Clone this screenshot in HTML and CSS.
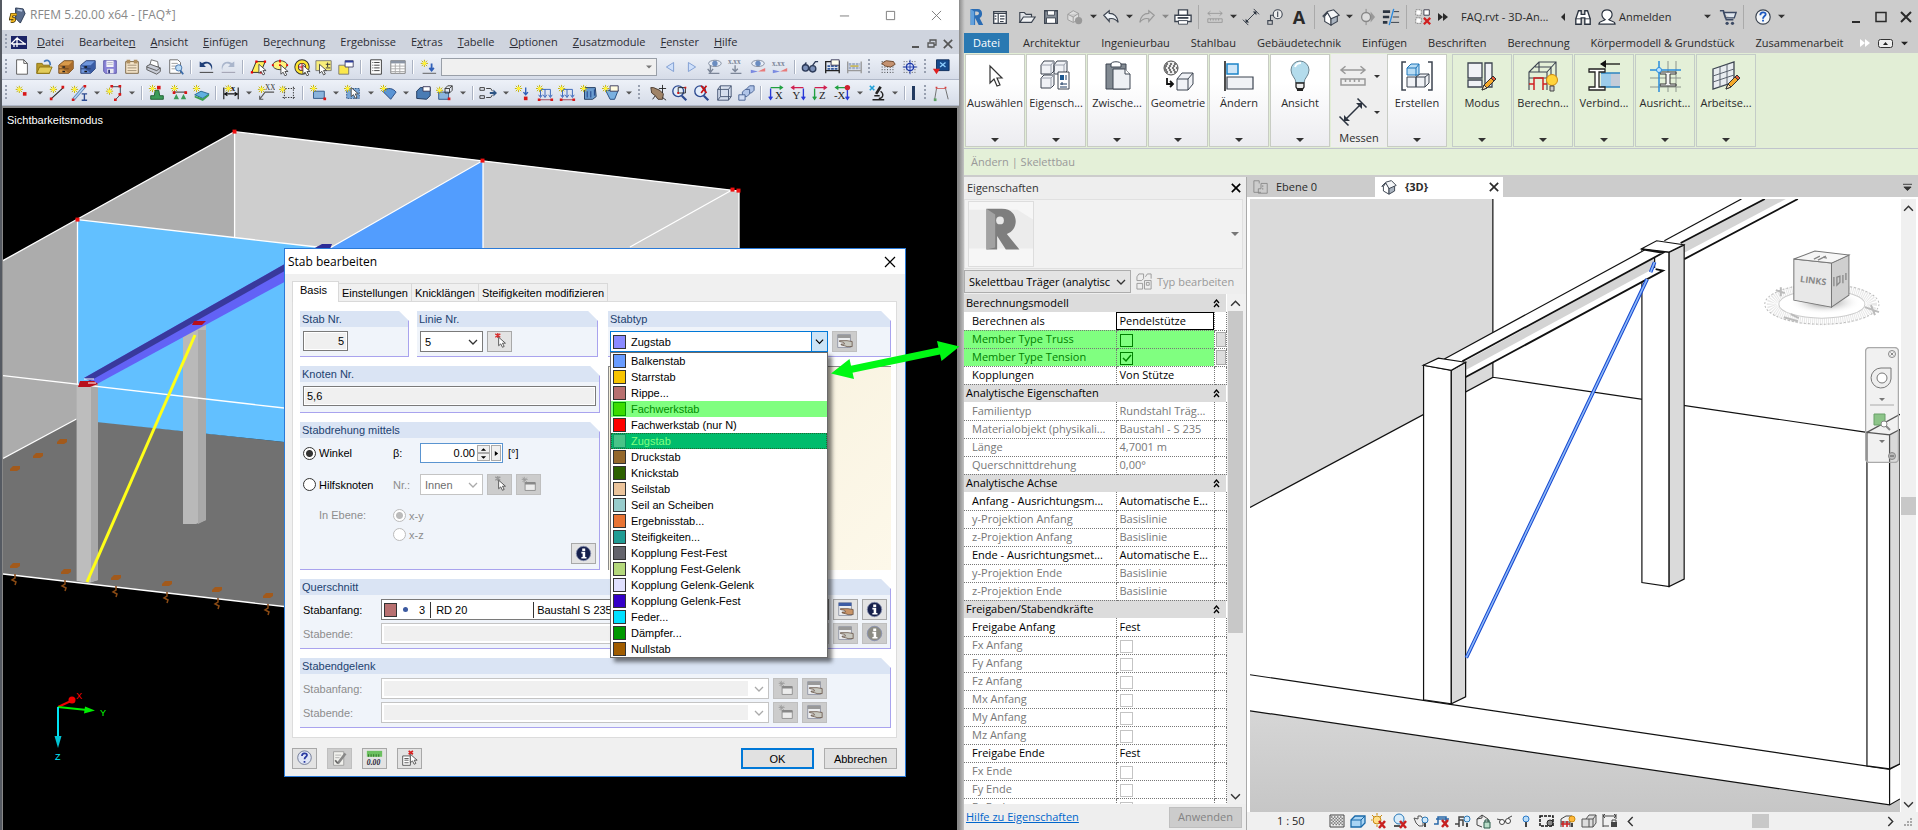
FILE: index.html
```html
<!DOCTYPE html>
<html lang="de">
<head>
<meta charset="utf-8">
<title>RFEM und Revit</title>
<link rel="stylesheet" href="styles.css">
</head>
<body>
<svg class="sprite" aria-hidden="true">
<defs>
<g id="star"><path d="M4 0v8M0 4h8M1 1l6 6M7 1l-6 6" stroke="#c4b410" stroke-width="1.1"/><circle cx="4" cy="4" r="2" fill="#fff23a"/></g>
<path id="cur" d="M0 0v10l2.500-2.200 2 4 2-1-2-3.800h3.500z" fill="#fff" stroke="#444"/>
</defs>
<symbol id="down" viewBox="0 0 8 8"><path d="M0 2h8l-4 4z" fill="currentColor"/></symbol>
<symbol id="chev" viewBox="0 0 10 10"><path d="M1 3l4 4 4-4" fill="none" stroke="currentColor" stroke-width="1.300"/></symbol>
<symbol id="x" viewBox="0 0 12 12"><path d="M1 1l10 10M11 1l-10 10" stroke="currentColor" stroke-width="var(--sw,1)"/></symbol>
<symbol id="new" viewBox="0 0 20 20"><path d="M4 2h8l4 4v12h-12z" fill="#fff" stroke="#555"/><path d="M12 2v4h4" fill="none" stroke="#555"/></symbol>
<symbol id="open" viewBox="0 0 20 20"><path d="M2 6h6l1 2h7v9h-14z" fill="#b99a2a" stroke="#8a7010"/><path d="M5 10h14l-3 7h-14z" fill="#e2cc5a" stroke="#8a7010"/><path d="M10 4c4-3 7-1 7 4" fill="none" stroke="#3f74b8" stroke-width="2"/></symbol>
<symbol id="cab" viewBox="0 0 20 20"><path d="M2 8l6-5h10v9l-5 5h-11z" fill="#d99a4a" stroke="#6e451a"/><path d="M2 8h11l5-5v9l-5 5z" fill="#a86c2c"/><path d="M2 12h11" stroke="#6e451a"/><path d="M6 10h3M6 15h3" stroke="#222" stroke-width="1.500"/></symbol>
<symbol id="cabb" viewBox="0 0 20 20"><path d="M2 8l6-5h10v9l-5 5h-11z" fill="#6f96dc" stroke="#22386e"/><path d="M2 8h11l5-5v9l-5 5z" fill="#3a5ca4"/><path d="M2 12h11" stroke="#22386e"/><path d="M6 10h3M6 15h3" stroke="#111" stroke-width="1.500"/></symbol>
<symbol id="save" viewBox="0 0 20 20"><path d="M3 3h14v14h-12l-2-2z" fill="#8a84d8" stroke="#5a55a8"/><path d="M6 3h8v7h-8z" fill="#f4f4f8"/><path d="M7 12h7v5h-7z" fill="#e8e8f0"/><path d="M8 13h2v4h-2z" fill="#333a80"/><path d="M7 5h6M7 7h6" stroke="#b8b8c8"/></symbol>
<symbol id="clip" viewBox="0 0 20 20"><path d="M3 4h14v13h-14z" fill="#f6e6cc" stroke="#75603c"/><path d="M5 8h10M5 11h10M5 14h10" stroke="#9a8a70"/><path d="M4 2h4v4h-4zM12 2h4v4h-4z" fill="#b09060"/></symbol>
<symbol id="print" viewBox="0 0 20 20"><path d="M5 9l2-7 7 2 1 6z" fill="#fff" stroke="#666"/><path d="M2 9l4-2 11 4v4l-4 3-11-5z" fill="#c8ccd6" stroke="#555"/><path d="M2 10l11 4 4-3" fill="none" stroke="#555"/></symbol>
<symbol id="prev" viewBox="0 0 20 20"><path d="M3 2h9l3 3v12h-12z" fill="#fff" stroke="#666"/><path d="M5 6h7M5 9h5M5 12h4" stroke="#999"/><circle cx="13" cy="11" r="3.500" fill="#bcdcf6" stroke="#3c6ca8"/><path d="M15 14l3 4" stroke="#3c6ca8" stroke-width="2"/></symbol>
<symbol id="undo" viewBox="0 0 20 20"><path d="M3 4v6h7l-2.500-2.500c4-3 8-1 9 6 2-7-3-12-11-8z" fill="#1f3f78"/><path d="M3 16h15" stroke="#333"/></symbol>
<symbol id="redo" viewBox="0 0 20 20"><path d="M17 4v6h-7l2.500-2.500c-4-3-8-1-9 6-2-7 3-12 11-8z" fill="#aab6cc"/><path d="M3 16h15" stroke="#99a"/></symbol>
<symbol id="s1" viewBox="0 0 20 20"><path d="M3 16l5-12h10l-5 12z" fill="#ffef5a" stroke="#222"/><path d="M2 16h2.500M7 4h2.500M16.500 4h2.500M12 16h2.500" stroke="#e00" stroke-width="2.500"/><use href="#cur" x="11" y="7"/></symbol>
<symbol id="s2" viewBox="0 0 20 20"><ellipse cx="10" cy="8" rx="8" ry="5" fill="#fff27a" stroke="#333"/><path d="M10 2v3M10 7v2M1 8h2M17 8h2M9 8h2" stroke="#e00" stroke-width="2"/><use href="#cur" x="11" y="8"/></symbol>
<symbol id="s3" viewBox="0 0 20 20"><circle cx="10" cy="10" r="6" fill="none" stroke="#333" stroke-width="5"/><circle cx="10" cy="10" r="6" fill="none" stroke="#ffe632" stroke-width="3"/><path d="M10 6v8M6 10h8" stroke="#e00"/><use href="#cur" x="11" y="8"/></symbol>
<symbol id="s4" viewBox="0 0 20 20"><path d="M1 3h17v11h-17z" fill="#f8ee7a" stroke="#777"/><path d="M14 5v5M12 7h5M12 11h5" stroke="#333"/><use href="#cur" x="5" y="7"/></symbol>
<symbol id="s5" viewBox="0 0 20 20"><path d="M2 8h11v10h-11z" fill="#fbe84c" stroke="#777"/><path d="M9 3h9v7h-9z" fill="#fff" stroke="#446"/><path d="M9 3h9v2h-9z" fill="#2a3c9c"/></symbol>
<symbol id="doc" viewBox="0 0 20 20"><path d="M4 2h12v16h-12z" fill="#fff" stroke="#333"/><path d="M6 5h1M6 8h1M6 11h1M6 14h1M8 5h6M8 8h6M8 11h6M8 14h6" stroke="#333"/></symbol>
<symbol id="tab" viewBox="0 0 20 20"><path d="M2 3h16v14h-16z" fill="#fff" stroke="#777"/><path d="M2 3h16v3h-16z" fill="#8a94a4"/><path d="M2 9h16M2 12h16M2 15h16M7 6v11M12 6v11" stroke="#aaa"/></symbol>
<symbol id="load" viewBox="0 0 20 20"><use href="#star" x="2" y="2"/><path d="M14 6v8M11.500 11l2.500 3 2.500-3" fill="none" stroke="#2f5fb8" stroke-width="2"/><path d="M4 17h15" stroke="#555"/></symbol>
<symbol id="lt" viewBox="0 0 20 20"><path d="M14 5v10l-8-5z" fill="#cfe0fa" stroke="#7a9ad0"/></symbol>
<symbol id="rt" viewBox="0 0 20 20"><path d="M6 5v10l8-5z" fill="#cfe0fa" stroke="#7a9ad0"/></symbol>
<symbol id="eye" viewBox="0 0 20 20"><ellipse cx="11" cy="6" rx="7" ry="3.500" fill="#e8eef8" stroke="#7c8698"/><circle cx="11" cy="6" r="3" fill="#6a8cc0"/><path d="M6 8v7M3 12l3 4 3-4M4 17h12" fill="none" stroke="#7c8698" stroke-width="1.500"/></symbol>
<symbol id="xx" viewBox="0 0 20 20"><text x="1" y="7" class="g8">x.xx</text><path d="M9 8v7M6 12l3 3 3-3M4 17h12" fill="none" stroke="#7c8698" stroke-width="1.500"/></symbol>
<symbol id="eye2" viewBox="0 0 20 20"><ellipse cx="10" cy="6" rx="7" ry="3.500" fill="#e8eef8" stroke="#7c8698"/><circle cx="10" cy="6" r="3" fill="#6a8cc0"/><path d="M2 17v-4l8 2z" fill="#7a8ae0"/><path d="M18 11v4h-8z" fill="#e87a7a"/></symbol>
<symbol id="xx2" viewBox="0 0 20 20"><text x="1" y="9" class="g8">x.xx</text><path d="M2 17v-4l8 2z" fill="#7a8ae0"/><path d="M18 11v4h-8z" fill="#e87a7a"/></symbol>
<symbol id="gls" viewBox="0 0 20 20"><path d="M2 10l4-5M10 12l6-8h3" fill="none" stroke="#2c3a58" stroke-width="1.500"/><circle cx="5" cy="11" r="3.500" fill="#7c90b8" stroke="#2c3a58" stroke-width="1.500"/><circle cx="13" cy="12" r="3.500" fill="#7c90b8" stroke="#2c3a58" stroke-width="1.500"/></symbol>
<symbol id="abk" viewBox="0 0 20 20"><path d="M3 17v-13h15v13M3 14h15" fill="none" stroke="#222" stroke-width="1.500"/><path d="M5 9h11M5 12h11" stroke="#335a9c" stroke-width="2" stroke-dasharray="3 1"/><path d="M9 2h9v6h-9z" fill="#ffe" stroke="#335"/></symbol>
<symbol id="abk2" viewBox="0 0 20 20"><path d="M3 17v-13M18 4v13M3 14h15" fill="none" stroke="#999" stroke-width="1.500"/><path d="M4 7h13M4 11h13" stroke="#a0aec8" stroke-width="3" stroke-dasharray="3 1"/><path d="M6 9h9" stroke="#c8b860" stroke-width="2"/></symbol>
<symbol id="dots" viewBox="0 0 20 20"><path d="M3 4h15M3 7h15M3 10h15M3 13h15M3 16h15" stroke="#222" stroke-dasharray="1 2"/><path d="M3 6l5-3 8 1 2 3-5 3-6-1z" fill="#c49270" stroke="#6a4428"/></symbol>
<symbol id="snap" viewBox="0 0 20 20"><path d="M3 4h15M3 7h15M3 10h15M3 13h15M3 16h15" stroke="#444" stroke-dasharray="1 2"/><circle cx="10" cy="10" r="4" fill="#dfe6ff" stroke="#1c38a8" stroke-width="1.500"/><path d="M10 2v16M2 10h16" stroke="#1c38a8"/></symbol>
<symbol id="mon" viewBox="0 0 20 20"><path d="M5 2h14v12h-14z" fill="#164a8c" stroke="#0b2a58"/><path d="M9 5l6 5M15 5l-6 5" stroke="#8fd0ff" stroke-width="1.500"/><path d="M1 12h8l-4 6z" fill="#e02020"/></symbol>
<symbol id="node" viewBox="0 0 20 20"><use href="#star" x="3" y="2"/><path d="M11 9h4v4h-4z" fill="#d81818"/></symbol>
<symbol id="line" viewBox="0 0 20 20"><path d="M4 16l13-12" stroke="#222" stroke-width="1.200"/><path d="M2 15h3v3h-3zM15 2h3v3h-3z" fill="#d81818"/><use href="#star" x="2" y="2"/></symbol>
<symbol id="beam" viewBox="0 0 20 20"><path d="M4 17l12-14" stroke="#5a82b8" stroke-width="3.500"/><path d="M4 17l12-14" stroke="#b8d8f4" stroke-width="1.500"/><use href="#star" x="1" y="2"/><path d="M13 11h6M16 11v7M13 18h6" stroke="#2c4a90" stroke-width="1.500"/><path d="M2 16h3v3h-3zM15 1h3v3h-3z" fill="#d81818"/></symbol>
<symbol id="poly" viewBox="0 0 20 20"><path d="M7 3h10v9l-5 5" fill="none" stroke="#334"/><use href="#star" x="1" y="4"/><path d="M6 1h3v3h-3zM15 1h3v3h-3zM15 10h3v3h-3zM10 16h3v3h-3z" fill="#d81818"/></symbol>
<symbol id="supp" viewBox="0 0 20 20"><path d="M8 7h4l1 6h4v4h-14v-4h4z" fill="#3c9c58" stroke="#1c5c30"/><use href="#star" x="1" y="1"/><path d="M10 2h4v4h-4z" fill="#d81818"/></symbol>
<symbol id="supl" viewBox="0 0 20 20"><use href="#star" x="1" y="1"/><path d="M5 9h13" stroke="#222"/><path d="M7 11l3 6h-6zM15 11l3 6h-6z" fill="#3c9c58"/><path d="M3 8h3v3h-3zM16 8h3v3h-3z" fill="#d81818"/></symbol>
<symbol id="sups" viewBox="0 0 20 20"><path d="M3 12l7-4 9 3-7 5z" fill="#60b0e0" stroke="#22628c"/><path d="M3 13v2l9 4 7-6v-2l-7 5z" fill="#3ca050"/><use href="#star" x="1" y="1"/></symbol>
<symbol id="dim" viewBox="0 0 20 20"><path d="M2 4v13M18 4v13M3 11h14M6 9l-3 2 3 2M14 9l3 2-3 2" fill="none" stroke="#111" stroke-width="1.200"/><use href="#star" x="3" y="1"/><text x="10" y="8" class="k9">x</text></symbol>
<symbol id="dimx" viewBox="0 0 20 20"><path d="M3 17l6-8h10M3 13v4h4" fill="none" stroke="#555" stroke-width="1.200"/><use href="#star" x="1" y="2"/><text x="9" y="7" class="k8">XX</text></symbol>
<symbol id="gbox" viewBox="0 0 20 20"><path d="M4 5h14M4 15h14M6 3v14M16 3v14" stroke="#222" stroke-dasharray="1.500 1.500"/><use href="#star" x="0" y="2"/></symbol>
<symbol id="surf" viewBox="0 0 20 20"><path d="M5 8h12v8h-12z" fill="#8ab4dc" stroke="#2c5484"/><use href="#star" x="1" y="1"/><path d="M16 15h3v3h-3z" fill="#d81818"/></symbol>
<symbol id="surc" viewBox="0 0 20 20"><path d="M3 5h14v11h-14z" fill="#7aa8d8" stroke="#2c5484" stroke-dasharray="2 1"/><use href="#star" x="0" y="1"/><use href="#cur" x="8" y="4"/></symbol>
<symbol id="fan" viewBox="0 0 20 20"><path d="M4 8c6-5 12-3 15 1l-6 8z" fill="#5a94d4" stroke="#22447c"/><use href="#star" x="1" y="1"/></symbol>
<symbol id="sol" viewBox="0 0 20 20"><path d="M3 8l4-4h11v9l-4 4-11-1z" fill="#4a7cb4" stroke="#1c3458"/><path d="M10 3h8v5h-8z" fill="#fff" stroke="#335"/></symbol>
<symbol id="opn" viewBox="0 0 20 20"><path d="M3 9h11v8h-11z" fill="#8ab4dc" stroke="#2c5484"/><path d="M10 5l3-3h5v5l-3 3h-5zM10 5h5v5M15 5l3-3" fill="none" stroke="#333"/><use href="#star" x="0" y="3"/><path d="M13 15h3v3h-3z" fill="#d81818"/></symbol>
<symbol id="link" viewBox="0 0 20 20"><path d="M1 4h5v3h-5zM1 13h5v3h-5zM8 5h5l2 3M8 15h5l2-3" fill="none" stroke="#333"/><path d="M12 9h4v-3l4 4-4 4v-3h-4z" fill="#2c5484"/></symbol>
<symbol id="nl" viewBox="0 0 20 20"><use href="#star" x="1" y="1"/><path d="M13 4v8M10.500 9l2.500 3 2.500-3" fill="none" stroke="#2f5fb8" stroke-width="1.500"/><path d="M11 14h4v4h-4z" fill="#d81818"/></symbol>
<symbol id="ll" viewBox="0 0 20 20"><path d="M5 6h11M5 6v8M10 6v8M16 6v8M3 12l2 3 2-3M8 12l2 3 2-3M14 12l2 3 2-3" fill="none" stroke="#2f5fb8"/><use href="#star" x="0" y="1"/><path d="M3 17.500h15" stroke="#a04050"/><path d="M2 16h3v3h-3zM16 16h3v3h-3z" fill="#d81818"/></symbol>
<symbol id="sl" viewBox="0 0 20 20"><path d="M5 4h12l1 10-4 3h-9z" fill="#6a9cd0" stroke="#1c3458"/><path d="M8 8v7M12 8v7M16 6v7" stroke="#183a80"/><use href="#star" x="0" y="1"/></symbol>
<symbol id="fl" viewBox="0 0 20 20"><path d="M4 7h14l-4 10h-5z" fill="#7ab0e0" stroke="#1c4478"/><path d="M9 2h9v6h-9z" fill="#fffbe0" stroke="#335"/><use href="#star" x="0" y="1"/></symbol>
<symbol id="hand" viewBox="0 0 20 20"><path d="M2 4l3 0 7 3 4 4-1 6h-5l-3-4-4-3z" fill="#a08468" stroke="#44362a"/><path d="M15 1v9M11 5h8M4 17l3-4M15 15l4 3" stroke="#222"/></symbol>
<symbol id="zm" viewBox="0 0 20 20"><circle cx="8" cy="8" r="6" fill="#e4eefa" stroke="#2c4a90" stroke-width="1.500"/><path d="M12 13l5 5" stroke="#2c4a90" stroke-width="2.500"/><path d="M8 4h8v6h-8z" fill="none" stroke="#222"/><path d="M15 3h2v2h-2zM7 9h2v2h-2z" fill="#d81818"/></symbol>
<symbol id="zx" viewBox="0 0 20 20"><circle cx="8" cy="8" r="6" fill="#e4eefa" stroke="#2c4a90" stroke-width="1.500"/><path d="M12 13l5 5" stroke="#2c4a90" stroke-width="2.500"/><path d="M9 2l6 8M15 2l-6 8" stroke="#c81010" stroke-width="1.800"/></symbol>
<symbol id="box" viewBox="0 0 20 20"><path d="M3 6l3-4h12v12l-3 4h-12zM3 6h12v12M15 6l3-4M6 2v12h12M6 14l-3 4" fill="#c8d4ea" fill-opacity=".5" stroke="#445470"/></symbol>
<symbol id="boxs" viewBox="0 0 20 20"><path d="M11 5l3-3h5v5l-3 3h-5z" fill="#b0c4e8" stroke="#445e90"/><path d="M6 9l3-3h5v5l-3 3h-5z" fill="#b0c4e8" stroke="#445e90"/><path d="M2 12h7v6h-7z" fill="#d0dcf4" stroke="#445e90"/></symbol>
<symbol id="vx" viewBox="0 0 20 20"><path d="M4 4h13M14 2l3 2-3 2" fill="none" stroke="#20a040" stroke-width="1.500"/><path d="M4 5v12M2 14l2 3 2-3" fill="none" stroke="#2838d8" stroke-width="1.500"/><text x="9" y="17" class="k11">X</text></symbol>
<symbol id="vy" viewBox="0 0 20 20"><path d="M3 4h13M6 2l-3 2 3 2" fill="none" stroke="#d02050" stroke-width="1.500"/><path d="M16 5v12M14 14l2 3 2-3" fill="none" stroke="#2838d8" stroke-width="1.500"/><text x="4" y="17" class="k11">Y</text></symbol>
<symbol id="vz" viewBox="0 0 20 20"><path d="M4 4h13M14 2l3 2-3 2" fill="none" stroke="#d02050" stroke-width="1.500"/><path d="M4 5v12M2 14l2 3 2-3" fill="none" stroke="#20a040" stroke-width="1.500"/><text x="9" y="17" class="k11">Z</text></symbol>
<symbol id="vm" viewBox="0 0 20 20"><path d="M3 4h12M6 2l-3 2 3 2" fill="none" stroke="#20a040" stroke-width="1.500"/><path d="M16 5v12M14 14l2 3 2-3" fill="none" stroke="#2838d8" stroke-width="1.500"/><circle cx="16" cy="4" r="3" fill="#d02030"/><text x="1" y="17" class="k11">-X</text></symbol>
<symbol id="mic" viewBox="0 0 20 20"><path d="M2 2l5 5M7 2l-5 5" stroke="#20a0d8" stroke-width="1.800"/><path d="M14 3l-5 8" stroke="#222" stroke-width="3"/><path d="M14 8c4 3 3 8-2 8M5 17.500h13M7 13h6" fill="none" stroke="#222" stroke-width="1.500"/></symbol>
<symbol id="frm" viewBox="0 0 20 20"><path d="M3 17l2-12h10l3 12" fill="none" stroke="#666"/><path d="M5 5h10" stroke="#e07070"/><path d="M2 16h3v3h-3z" fill="#5aa060"/><path d="M4 3h2v2h-2zM14 3h2v2h-2z" fill="#d84040"/></symbol>
<symbol id="edit" viewBox="0 0 20 20"><path d="M2 2h15v15h-15z" fill="#eceef0" stroke="#8a90a0"/><path d="M2 2h15v4h-15z" fill="var(--bar,#3c5ca4)"/><path d="M4 9h9l6 1v6h-6l-3-1-4-1v-1h4l-1-2-5-1z" fill="var(--hand,#c89468)" stroke="#554030" stroke-width=".8"/></symbol>
<symbol id="info" viewBox="0 0 20 20"><circle cx="10" cy="10" r="8.500" fill="var(--inf,#16204c)" stroke="#8890b0"/><path d="M8.500 4h3.500v3h-3.500zM7.500 8h4.500v6h1.500v2h-6v-2h1.500v-4h-1.500z" fill="#fff"/></symbol>
<symbol id="pick" viewBox="0 0 20 20"><path d="M5 1l6 4M11 1l-6 4M8 0v6" stroke="var(--red,#d83030)" stroke-width="1.500"/><use href="#cur" x="9" y="5"/></symbol>
<symbol id="nwin" viewBox="0 0 20 20"><path d="M6 8h12v9h-12z" fill="#ececec" stroke="#888"/><path d="M6 7h12v3h-12z" fill="#888"/><path d="M5 1v7M2 4h7M3 2l5 5M8 2l-5 5" stroke="#999"/></symbol>
<symbol id="help" viewBox="0 0 20 20"><circle cx="10" cy="9" r="8" fill="#dfe5f6" stroke="#66708c"/><path d="M7 7c0-4 6-4 6-1 0 2-3 2-3 5M10 13v2" fill="none" stroke="#2838a0" stroke-width="2"/></symbol>
<symbol id="note" viewBox="0 0 20 20"><path d="M3 2h12v16h-12z" fill="#f0f0ec" stroke="#999"/><path d="M5 6h7M5 9h5" stroke="#aaa"/><path d="M8 16l9-12" stroke="#888" stroke-width="3"/><path d="M5 12l3 4" stroke="#666" stroke-width="2"/></symbol>
<symbol id="num" viewBox="0 0 20 20"><path d="M1 1h18v7h-18z" fill="#6cc060"/><path d="M3 5v3M6 5v3M9 5v3M12 5v3M15 5v3" stroke="#286820"/><text x="1" y="18" class="n9">0.00</text></symbol>
<symbol id="plist" viewBox="0 0 20 20"><path d="M2 7h9v11h-9z" fill="#fff" stroke="#444"/><path d="M4 10h5M4 12h5M4 15h5" stroke="#444"/><path d="M9 1l5 4M14 1l-5 4" stroke="#d82020" stroke-width="2"/><use href="#cur" x="11" y="5"/></symbol>

<symbol id="rl" viewBox="0 0 20 20"><path d="M4 1h8c6 0 6 9 2 10l4 8h-5l-4-8v8h-5z" fill="#2a6cb4"/><path d="M9 4h2c3 0 3 4 0 4h-2z" fill="#ccc"/><path d="M4 1l4 3v15h-4z" fill="#62a0dc"/></symbol>
<symbol id="pj" viewBox="0 0 20 20"><path d="M3 4h14v13h-14z" fill="#fff" stroke="#3c4450" stroke-width="1.500"/><path d="M3 6h14M8 6v11M10 9h5M10 12h5M10 15h4M4 9h2M4 12h2" stroke="#3c4450" stroke-width="1.300"/></symbol>
<symbol id="ro" viewBox="0 0 20 20"><path d="M2 16v-11h5l2 2h6v3" fill="#dfe2e6" stroke="#3c4450" stroke-width="1.300"/><path d="M2 16l4-6h13l-4 6z" fill="#f0f2f4" stroke="#3c4450" stroke-width="1.300"/></symbol>
<symbol id="rs" viewBox="0 0 20 20"><path d="M3 3h14v14h-14z" fill="#8c949e" stroke="#3c4450" stroke-width="1.500"/><path d="M6 3h8v5h-8zM5 11h10v6h-10z" fill="#fff" stroke="#3c4450"/></symbol>
<symbol id="sync" viewBox="0 0 20 20"><path d="M2 7l6-4 6 3v7l-6 3-6-3zM2 7l6 3 6-4M8 10v6" fill="#ddd" stroke="#999"/><circle cx="14" cy="14" r="4" fill="#999"/></symbol>
<symbol id="ru" viewBox="0 0 20 20"><path d="M2 8l6-5v3c6 0 9 3 10 10-3-4-6-5-10-4v3z" fill="#eef2f6" stroke="#3c4450" stroke-width="1.300"/></symbol>
<symbol id="rr" viewBox="0 0 20 20"><path d="M18 8l-6-5v3c-6 0-9 3-10 10 3-4 6-5 10-4v3z" fill="#ccc" stroke="#999" stroke-width="1.300"/></symbol>
<symbol id="rp" viewBox="0 0 20 20"><path d="M5 8v-6h10v6" fill="#fff" stroke="#3c4450" stroke-width="1.500"/><path d="M1 8h18v7h-18z" fill="#fff" stroke="#3c4450" stroke-width="1.500"/><path d="M4 11h12" stroke="#3c4450" stroke-width="2"/><path d="M5 14h10v4h-10z" fill="#fff" stroke="#3c4450"/></symbol>
<symbol id="rd" viewBox="0 0 20 20"><path d="M2 6h16M5 3.500l-3 2.500 3 2.500M15 3.500l3 2.500-3 2.500M2 12h16v4h-16zM5 12v2M8 12v2M11 12v2M14 12v2" fill="none" stroke="#999"/></symbol>
<symbol id="rm" viewBox="0 0 20 20"><path d="M4 16l12-12M1 13l6 6M13 1l6 6" fill="none" stroke="#2c3440"/><path d="M4 16v-4l4 4zM16 4v4l-4-4z" fill="#2c3440"/></symbol>
<symbol id="tag" viewBox="0 0 20 20"><circle cx="13" cy="7" r="5" fill="#eee" stroke="#3c4450" stroke-width="1.200"/><path d="M13 4v6M8 8h-3v6M2 14h5v4h-5z" fill="none" stroke="#3c4450" stroke-width="1.200"/></symbol>
<symbol id="house" viewBox="0 0 20 20"><path d="M3 9v6l7 4v-8l-4-6z" fill="#fff" stroke="#3c4450" stroke-width="1.200"/><path d="M10 11v8l7-4v-7z" fill="#aab4c0" stroke="#3c4450" stroke-width="1.200"/><path d="M1 9l5-5 7-2 6 6-9 4-4-7-4 5z" fill="#f4f6f8" stroke="#3c4450" stroke-width="1.200"/></symbol>
<symbol id="sec" viewBox="0 0 20 20"><path d="M14 4l5 6-5 6z" fill="#999"/><circle cx="9" cy="10" r="5" fill="#ddd" stroke="#888" stroke-width="1.500"/><path d="M9 1v4M9 15v4" stroke="#888"/></symbol>
<symbol id="thin" viewBox="0 0 20 20"><path d="M1 4h8M1 10h7M1 16h5" stroke="#2c3440" stroke-width="3"/><path d="M13 4h6M12 10h7M10 16h9" stroke="#2c3440"/><path d="M8 19l5-18" stroke="#2a8ae0" stroke-width="1.500"/></symbol>
<symbol id="cw" viewBox="0 0 20 20"><path d="M2 2h6v6h-6zM2 11h6v6h-6z" fill="#fff" stroke="#777" stroke-dasharray="2 1"/><path d="M11 2h6v6h-6z" fill="#fff" stroke="#334"/><path d="M11 11l7 7M18 11l-7 7" stroke="#d02020" stroke-width="2.500"/></symbol>
<symbol id="bin" viewBox="0 0 20 20"><path d="M5 3h3v4h4v-4h3l3 9v6h-6v-7h-4v7h-6v-6z" fill="#fff" stroke="#2c3440" stroke-width="1.500"/><path d="M2 12h6M12 12h6" stroke="#2c3440"/></symbol>
<symbol id="usr" viewBox="0 0 20 20"><path d="M1 18c0-4 5-3 7-5-6-4-4-11 2-11s8 7 2 11c2 2 7 1 7 5z" fill="#fff" stroke="#2c3440" stroke-width="1.300"/></symbol>
<symbol id="cart" viewBox="0 0 20 20"><path d="M1 3h4l3 10h8M5 5h14l-2 6h-10z" fill="#dfe6ee" stroke="#3c4a64" stroke-width="1.500"/><circle cx="9" cy="17" r="1.800" fill="#3c4a64"/><circle cx="15" cy="17" r="1.800" fill="#3c4a64"/></symbol>
<symbol id="q" viewBox="0 0 20 20"><circle cx="10" cy="10" r="8" fill="#f4f6f8" stroke="#3c4450" stroke-width="1.300"/><path d="M7 8c0-4 6-4 6-1 0 2-3 2-3 5M10 13v2" fill="none" stroke="#1c58c0" stroke-width="2"/></symbol>

<symbol id="b1" viewBox="0 0 32 32"><path d="M11 6v17l4-4 3 7 3-1-3-7h5z" fill="#fff" stroke="#333" stroke-width="1.200"/></symbol>
<symbol id="b2" viewBox="0 0 32 32"><g fill="#f0f2f6" stroke="#3c4450"><path d="M1 5l3-4h10v10l-3 3h-10zM14 5l3-4h10v10l-3 3h-10zM1 18l3-3h10v10l-3 3h-10z"/><path d="M1 5h10v9M11 5l3-4M14 5h10v9M24 5l3-4M1 18h10v10M11 18l3-3" fill="none" stroke="#9aa0ac"/></g><path d="M18 12h11v17h-11z" fill="#fff" stroke="#3c4450"/><path d="M20 15h4v5h-4z" fill="#1c5890"/><path d="M26 15v5M20 24h7M20 27h7M22 22v3" stroke="#1c3a60"/></symbol>
<symbol id="b3" viewBox="0 0 32 32"><path d="M5 4h20v25h-20z" fill="#828a92" stroke="#3c4450"/><path d="M10 4c0-3 10-3 10 0v3h-10z" fill="#fff" stroke="#3c4450"/><path d="M12 9h12l5 5v15h-17z" fill="#eef0f4" stroke="#3c4450"/><path d="M24 9v5h5" fill="#fff" stroke="#3c4450"/></symbol>
<symbol id="b4" viewBox="0 0 32 32"><circle cx="9" cy="8" r="7" fill="#eee" stroke="#444"/><path d="M4 4h10M3 6h12M2 8h14M3 10h12M4 12h10" stroke="#777" stroke-width="2" stroke-dasharray="2 2"/><path d="M5 18v6h6M8 21l3 3-3 3" fill="none" stroke="#111" stroke-width="1.800"/><path d="M15 19l5-6h11v11l-5 6h-11zM15 19h11v11M26 19l5-6" fill="#f0f2f6" stroke="#3c4450"/></symbol>
<symbol id="b5" viewBox="0 0 32 32"><path d="M2 1v30" stroke="#111" stroke-width="1.500"/><path d="M4 4h11v10h-11z" fill="#cfe6f8" stroke="#1c84c8" stroke-width="1.500"/><path d="M4 17h26v12h-26z" fill="#f0f2f6" stroke="#3c4450" stroke-width="1.200"/></symbol>
<symbol id="b6" viewBox="0 0 32 32"><path d="M12 23c0-5-5-7-5-13a9 9 0 0 1 18 0c0 6-5 8-5 13z" fill="#b4dcec" stroke="#6c8490"/><path d="M11 7c1-3 4-4 6-4" stroke="#fff" stroke-width="2" fill="none"/><path d="M12 23h8v4l-2 3h-4l-2-3z" fill="#eee" stroke="#222" stroke-width="1.300"/><path d="M13 28h6v3h-6z" fill="#222"/></symbol>
<symbol id="b7" viewBox="0 0 32 32"><path d="M5 2h-4v28h4M27 2h4v28h-4" fill="none" stroke="#3c4450" stroke-width="1.500"/><path d="M6 8l4-4h8v11h-12zM6 8h9v8M15 8l3-4" fill="#b8dcf4" stroke="#1c74b8"/><path d="M6 17h9v10h-9zM15 17l4-3h9v9l-4 4h-9zM15 17h9v10M24 17l4-3" fill="#f0f2f6" stroke="#3c4450"/></symbol>
<symbol id="pen" viewBox="0 0 16 16"><path d="M1 15l2-5 8-8 3 3-8 8z" fill="#f4a82a" stroke="#333"/><path d="M1 15l2-5 3 3z" fill="#ffe4b8" stroke="#333"/><path d="M10 3l2-2 3 3-2 2z" fill="#e05a3a" stroke="#333"/></symbol>
<symbol id="g1" viewBox="0 0 32 32"><path d="M2 3h14v15h-14zM19 3h7v24h-7zM2 20h14v7h-14z" fill="#f0f2f6" stroke="#3c4450" stroke-width="1.300"/><use href="#pen" x="15" y="15" width="16" height="16"/></symbol>
<symbol id="g2" viewBox="0 0 32 32"><path d="M2 30v-18l10-10h17v20M2 12h18v18M20 12l9-10M2 18h18M12 2v10M8 7h17M24 8v14" fill="none" stroke="#3c4450" stroke-width="1.100"/><path d="M7 30v-12h9v12M2 24h5M16 24h4" fill="none" stroke="#d02020" stroke-width="1.500"/><circle cx="25" cy="20" r="5.500" fill="#ffd43a" stroke="#d08a10"/><path d="M23 26h4v5h-4z" fill="#ccc" stroke="#444"/></symbol>
<symbol id="g3" viewBox="0 0 32 32"><path d="M13 4h19" stroke="#111" stroke-width="1.300"/><path d="M18 0v8l-6-4z" fill="#111"/><path d="M13 13h19v14h-19z" fill="#9cccea"/><path d="M23 13h9v14h-9z" fill="#c4ccd8"/><path d="M13 13h19M13 27h19" stroke="#2c84c0" stroke-width="1.300"/><path d="M1 9h16v3h-6v15h6v3h-16v-3h6v-15h-6z" fill="#fff" stroke="#222" stroke-width="1.300"/></symbol>
<symbol id="g4" viewBox="0 0 32 32"><path d="M19 1v31M27 1v31M1 18h31M1 27h31" stroke="#8c948c"/><path d="M11 12h16v2h-6v10h6v2h-16v-2h6v-10h-6z" fill="#f4f4f4" stroke="#333"/><path d="M10 1v31M1 10h31" stroke="#2a8cdc" stroke-width="1.500"/><circle cx="10" cy="10" r="2.500" fill="#bfe4ff" stroke="#2a8cdc"/></symbol>
<symbol id="g5" viewBox="0 0 32 32"><path d="M3 9l21-7v20l-21 7z" fill="#e8ecf0" stroke="#3c4450" stroke-width="1.300"/><path d="M10 7v20M17 4v20M3 16l21-7M3 22l21-7" stroke="#5c6470"/><use href="#pen" x="15" y="14" width="16" height="16"/></symbol>
</svg>

<main class="screen">
<section class="rfem" aria-label="RFEM">
  <header class="r-title">
    <svg class="logo" viewBox="0 0 18 18"><path d="M7 1l8 1 2 5-5 10-5-5z" fill="#5a6c8c" stroke="#2c3a54"/><path d="M9 3l5 1" stroke="#b0c0dc" stroke-width="2"/><path d="M8 8h-5l-1 4c5-1 5 4 0 3" fill="none" stroke="#3a2c00" stroke-width="3.500"/><path d="M8 8h-5l-1 4c5-1 5 4 0 3" fill="none" stroke="#f4b820" stroke-width="2"/></svg>
    <h1>RFEM 5.20.00 x64 - [FAQ*]</h1>
    <div class="winbtns">
      <button aria-label="Minimieren"><svg viewBox="0 0 12 12"><path d="M1 6.500h10" stroke="currentColor"/></svg></button>
      <button aria-label="Maximieren"><svg viewBox="0 0 12 12"><path d="M1.500 1.500h9v9h-9z" fill="none" stroke="currentColor"/></svg></button>
      <button aria-label="Schließen"><svg><use href="#x"/></svg></button>
    </div>
  </header>
  <nav class="r-menu">
    <i class="grip"></i>
    <svg class="bridge" viewBox="0 0 16 13"><path d="M0 0h16v13h-16z" fill="#1c2466"/><path d="M0 8l6-6v9M6 2l8 6M1 8h14M3 8v3" fill="none" stroke="#fff" stroke-width="1.300"/></svg>
    <div class="menus"><button><u>D</u>atei</button><button>Bearbeite<u>n</u></button><button><u>A</u>nsicht</button><button><u>E</u>infügen</button><button>Be<u>r</u>echnung</button><button>Er<u>g</u>ebnisse</button><button>E<u>x</u>tras</button><button><u>T</u>abelle</button><button><u>O</u>ptionen</button><button><u>Z</u>usatzmodule</button><button><u>F</u>enster</button><button><u>H</u>ilfe</button></div>
    <div class="mdi"><svg viewBox="0 0 10 10"><path d="M1 8h7" stroke="currentColor" stroke-width="2"/></svg><svg viewBox="0 0 10 10"><path d="M3 3v-2h6v5h-2M1 4h6v4h-6z" fill="none" stroke="currentColor" stroke-width="1.300"/></svg><svg class="bold"><use href="#x"/></svg></div>
  </nav>
  <div class="bar">
    <i class="grip"></i>
    <button><svg><use href="#new"/></svg></button><button><svg><use href="#open"/></svg></button><button><svg><use href="#cab"/></svg></button><button><svg><use href="#cabb"/></svg></button><button><svg><use href="#save"/></svg></button><button><svg><use href="#clip"/></svg></button><button><svg><use href="#print"/></svg></button><button><svg><use href="#prev"/></svg></button>
    <i class="sep"></i><button><svg><use href="#undo"/></svg></button><button><svg><use href="#redo"/></svg></button>
    <i class="sep"></i><button><svg><use href="#s1"/></svg></button><button><svg><use href="#s2"/></svg></button><button><svg><use href="#s3"/></svg></button><button><svg><use href="#s4"/></svg></button><button><svg><use href="#s5"/></svg></button>
    <i class="sep"></i><button><svg><use href="#doc"/></svg></button><button><svg><use href="#tab"/></svg></button>
    <i class="sep"></i><button><svg><use href="#load"/></svg></button>
    <span class="pick loadcase"><select aria-label="Lastfall"><option></option></select><svg><use href="#down"/></svg></span>
    <button><svg><use href="#lt"/></svg></button><button><svg><use href="#rt"/></svg></button><button><svg><use href="#eye"/></svg></button><button><svg><use href="#xx"/></svg></button><button><svg><use href="#eye2"/></svg></button><button><svg><use href="#xx2"/></svg></button>
    <i class="sep"></i><button><svg><use href="#gls"/></svg></button><button><svg><use href="#abk"/></svg></button><button><svg><use href="#abk2"/></svg></button>
    <i class="grip mid"></i><button><svg><use href="#dots"/></svg></button><button><svg><use href="#snap"/></svg></button>
    <i class="grip"></i><button><svg><use href="#mon"/></svg></button>
  </div>
  <div class="bar">
    <i class="grip"></i>
    <button><svg><use href="#node"/></svg></button><button class="dd"><svg><use href="#down"/></svg></button><button><svg><use href="#line"/></svg></button><button><svg><use href="#beam"/></svg></button><button class="dd"><svg><use href="#down"/></svg></button><button><svg><use href="#poly"/></svg></button><button class="dd"><svg><use href="#down"/></svg></button>
    <i class="sep"></i><button><svg><use href="#supp"/></svg></button><button><svg><use href="#supl"/></svg></button><button><svg><use href="#sups"/></svg></button>
    <i class="sep"></i><button><svg><use href="#dim"/></svg></button><button class="dd"><svg><use href="#down"/></svg></button><button><svg><use href="#dimx"/></svg></button><button><svg><use href="#gbox"/></svg></button>
    <i class="sep"></i><button><svg><use href="#surf"/></svg></button><button class="dd"><svg><use href="#down"/></svg></button><button><svg><use href="#surc"/></svg></button><button class="dd"><svg><use href="#down"/></svg></button><button><svg><use href="#fan"/></svg></button><button class="dd"><svg><use href="#down"/></svg></button><button><svg><use href="#sol"/></svg></button><button><svg><use href="#opn"/></svg></button><button class="dd"><svg><use href="#down"/></svg></button>
    <i class="sep"></i><button><svg><use href="#link"/></svg></button><button class="dd"><svg><use href="#down"/></svg></button><button><svg><use href="#nl"/></svg></button><button><svg><use href="#ll"/></svg></button><button><svg><use href="#ll"/></svg></button><button><svg><use href="#sl"/></svg></button><button><svg><use href="#fl"/></svg></button><button class="dd"><svg><use href="#down"/></svg></button>
    <i class="grip mid"></i><button><svg><use href="#hand"/></svg></button><button><svg><use href="#zm"/></svg></button><button><svg><use href="#zx"/></svg></button><button><svg><use href="#box"/></svg></button><button><svg><use href="#boxs"/></svg></button>
    <i class="sep"></i><button><svg><use href="#vx"/></svg></button><button><svg><use href="#vy"/></svg></button><button><svg><use href="#vz"/></svg></button><button><svg><use href="#vm"/></svg></button><button class="dd"><svg><use href="#down"/></svg></button><button><svg><use href="#mic"/></svg></button><button class="dd"><svg><use href="#down"/></svg></button>
    <i class="sep"></i><i class="cut"></i>
    <i class="grip"></i><button><svg><use href="#frm"/></svg></button>
  </div>

  <div class="scene">
    <svg class="view" viewBox="3 108 954 722" preserveAspectRatio="xMinYMin slice">
      <path d="M3 260.600L77.500 219.600V419L3 458.500z" fill="#acacac"/>
      <path d="M77.500 219.600L234.600 131.700V300H77.500z" fill="#adadad"/>
      <path d="M234.600 131.700L739 191V300H234.600z" fill="#cecece"/>
      <path d="M3 458.500L76.500 419L284 442V606.500L3 574z" fill="#717171"/>
      <path d="M77.500 219.600L317 247L340 250V448L77.500 420z" fill="#62c0ff"/>
      <path d="M330 248L483 160.500V300H330z" fill="#529dfe"/>
      <g stroke="#fff" stroke-width="1.300" fill="none"><path d="M3 260.600L234.600 131.700L739 191V250M234.600 131.700V238M77.500 219.600V384M77.500 219.600L317 247M330 248L483 160.500V250M732 190L630 247M3 574L284 606.500M3 458.500L76.500 419"/></g>
      <path d="M183 330l6-7h17v197l-10 4h-13z" fill="#b9b9b9"/><path d="M198 330h8v190l-8 4z" fill="#a9a9a9"/>
      <path d="M76.600 384h21.400v196l-9 3-12.400-2z" fill="#bdbdbd"/><path d="M91 384h7v196l-7 2z" fill="#a9a9a9"/>
      <path d="M3 375.600L284 408" stroke="#fff" stroke-width="1.300"/>
      <path d="M84 378L290 261V279L97 384z" fill="#6262f6"/><path d="M84 378L290 261V268L90 381z" fill="#39399c"/><path d="M313 249l9-5h10l-2 5z" fill="#2c2c98"/>
      <path d="M80 381l14 0 4 3-8 3h-12zM194 321h12l-4 4h-10z" fill="#b8101c"/><path d="M84 379h10M88 383h8" stroke="#fff"/>
      <path d="M195 335L87 582" stroke="#ffff18" stroke-width="3"/>
      <g fill="#a25a1c"><path id="sp" d="M10 566l3-3h7v3l-3 2h-7z"/><use href="#sp" x="51" y="6"/><use href="#sp" x="101" y="12"/><use href="#sp" x="152" y="18"/><use href="#sp" x="202" y="24"/><use href="#sp" x="253" y="30"/><use href="#sp" y="-97"/><use href="#sp" x="23" y="-110"/><use href="#sp" x="47" y="-124"/></g>
      <g fill="none" stroke="#8a4a14" stroke-width="1.500"><path id="sg" d="M15 574v4l-3 2 4 2-1 3"/><use href="#sg" x="50" y="6"/><use href="#sg" x="101" y="12"/><use href="#sg" x="152" y="18"/><use href="#sg" x="203" y="24"/><use href="#sg" x="253" y="30"/></g>
      <g fill="#f01010"><path id="nd" d="M75.500 217.600h4v4h-4z"/><use href="#nd" x="157" y="-88"/><use href="#nd" x="405" y="-59"/><use href="#nd" x="655" y="-30"/><use href="#nd" x="661" y="-29"/></g>
      <path d="M58 707L73 700" stroke="#f00000" stroke-width="2"/><circle cx="72" cy="700" r="3.500" fill="#e00"/>
      <path d="M58 707L87 710" stroke="#0e0" stroke-width="2"/><path d="M85 706.500l10 4-11 3z" fill="#0e0"/>
      <path d="M58 707V740" stroke="#00e4f4" stroke-width="2"/><path d="M54.500 736h7l-3.500 12z" fill="#00c4d4"/>
      <text x="76" y="699" class="ax" fill="#f00">X</text><text x="100" y="716" class="ax" fill="#0f0">Y</text><text x="55" y="760" class="ax" fill="#0ef">Z</text>
    </svg>
    <span class="mode">Sichtbarkeitsmodus</span>

    <form class="dialog" role="dialog" aria-labelledby="dt" onsubmit="return false">
      <header class="d-title"><h2 id="dt">Stab bearbeiten</h2><button type="button" aria-label="Dialog schließen"><svg><use href="#x"/></svg></button></header>
      <div class="d-body">
        <div class="tabs" role="tablist"><button type="button" role="tab" class="on" aria-selected="true">Basis</button><button type="button" role="tab">Einstellungen</button><button type="button" role="tab">Knicklängen</button><button type="button" role="tab">Steifigkeiten modifizieren</button></div>
        <div class="panel">
          <div class="cols">
            <div class="col">
              <div class="pair">
                <fieldset class="grp"><legend>Stab Nr.</legend><div class="line"><input class="txt num" value="5" readonly aria-label="Stab Nr."></div></fieldset>
                <fieldset class="grp"><legend>Linie Nr.</legend><div class="line"><span class="pick sm"><select aria-label="Linie Nr."><option>5</option></select><svg><use href="#chev"/></svg></span><button type="button" class="ib"><svg><use href="#pick"/></svg></button></div></fieldset>
              </div>
              <fieldset class="grp"><legend>Knoten Nr.</legend><div class="line"><input class="txt wide" value="5,6" readonly aria-label="Knoten Nr."></div></fieldset>
              <fieldset class="grp"><legend>Stabdrehung mittels</legend>
                <div class="rot">
                  <input type="radio" name="rot" id="wi" checked><label for="wi">Winkel</label><label for="be">β:</label>
                  <div class="line"><span class="spin"><input id="be" value="0.00"><span class="ud"><button type="button" aria-label="Mehr"><svg viewBox="0 0 8 5"><path d="M1 4h6l-3-3z"/></svg></button><button type="button" aria-label="Weniger"><svg viewBox="0 0 8 5"><path d="M1 1h6l-3 3z"/></svg></button></span><button type="button" class="rt" aria-label="Liste"><svg viewBox="0 0 6 8"><path d="M1 1v6l4-3z"/></svg></button></span><span>[°]</span></div>
                  <input type="radio" name="rot" id="hk"><label for="hk">Hilfsknoten</label><label class="off" for="inn">Nr.:</label>
                  <div class="line"><span class="pick sm off"><select id="inn" disabled><option>Innen</option></select><svg><use href="#chev"/></svg></span><button type="button" class="ib off" disabled><svg><use href="#pick"/></svg></button><button type="button" class="ib off" disabled><svg><use href="#nwin"/></svg></button></div>
                  <span class="off plane">In Ebene:</span>
                  <div class="planes off"><label><input type="radio" name="pl" checked disabled>x-y</label><label><input type="radio" name="pl" disabled>x-z</label></div>
                  <button type="button" class="ib inf" aria-label="Info"><svg><use href="#info"/></svg></button>
                </div>
              </fieldset>
            </div>
            <div class="col type">
              <fieldset class="grp"><legend>Stabtyp</legend><div class="line"><button type="button" class="combo" role="combobox" aria-expanded="true" aria-controls="types"><i class="sw c-zug"></i><span>Zugstab</span><b><svg><use href="#chev"/></svg></b></button><button type="button" class="ib off" disabled><svg><use href="#edit"/></svg></button></div></fieldset>
              <div class="preview"></div>
              <ul class="types" id="types" role="listbox">
                <li role="option"><i class="sw c1"></i>Balkenstab</li><li role="option"><i class="sw c2"></i>Starrstab</li><li role="option"><i class="sw c3"></i>Rippe...</li><li role="option" class="hl"><i class="sw c4"></i>Fachwerkstab</li><li role="option"><i class="sw c5"></i>Fachwerkstab (nur N)</li><li role="option" class="cur" aria-selected="true"><i class="sw c6"></i>Zugstab</li><li role="option"><i class="sw c7"></i>Druckstab</li><li role="option"><i class="sw c8"></i>Knickstab</li><li role="option"><i class="sw c9"></i>Seilstab</li><li role="option"><i class="sw c10"></i>Seil an Scheiben</li><li role="option"><i class="sw c11"></i>Ergebnisstab...</li><li role="option"><i class="sw c12"></i>Steifigkeiten...</li><li role="option"><i class="sw c13"></i>Kopplung Fest-Fest</li><li role="option"><i class="sw c14"></i>Kopplung Fest-Gelenk</li><li role="option"><i class="sw c15"></i>Kopplung Gelenk-Gelenk</li><li role="option"><i class="sw c16"></i>Kopplung Gelenk-Fest</li><li role="option"><i class="sw c17"></i>Feder...</li><li role="option"><i class="sw c18"></i>Dämpfer...</li><li role="option"><i class="sw c19"></i>Nullstab</li>
              </ul>
            </div>
          </div>
          <fieldset class="grp"><legend>Querschnitt</legend>
            <div class="line"><span class="lab" id="qa">Stabanfang:</span><button type="button" class="cs" aria-labelledby="qa"><i class="sw c3"></i><i class="dot"></i><span>3</span><span class="mat">RD 20</span><span>Baustahl S 235</span></button><button type="button" class="ib"><svg><use href="#edit"/></svg></button><button type="button" class="ib"><svg><use href="#info"/></svg></button></div>
            <div class="line off"><label class="lab" for="qe">Stabende:</label><span class="pick off grow"><select id="qe" disabled></select><svg><use href="#chev"/></svg></span><button type="button" class="ib off" disabled><svg><use href="#edit"/></svg></button><button type="button" class="ib off" disabled><svg><use href="#info"/></svg></button></div>
          </fieldset>
          <fieldset class="grp ends"><legend>Stabendgelenk</legend>
            <div class="line off"><label class="lab" for="ga">Stabanfang:</label><span class="pick off grow"><select id="ga" disabled></select><svg><use href="#chev"/></svg></span><button type="button" class="ib off" disabled><svg><use href="#nwin"/></svg></button><button type="button" class="ib off" disabled><svg><use href="#edit"/></svg></button></div>
            <div class="line off"><label class="lab" for="ge">Stabende:</label><span class="pick off grow"><select id="ge" disabled></select><svg><use href="#chev"/></svg></span><button type="button" class="ib off" disabled><svg><use href="#nwin"/></svg></button><button type="button" class="ib off" disabled><svg><use href="#edit"/></svg></button></div>
          </fieldset>
        </div>
        <footer class="d-foot"><button type="button" class="ib" aria-label="Hilfe"><svg><use href="#help"/></svg></button><button type="button" class="ib off" disabled><svg><use href="#note"/></svg></button><button type="button" class="ib"><svg><use href="#num"/></svg></button><button type="button" class="ib"><svg><use href="#plist"/></svg></button><button class="btn ok">OK</button><button type="button" class="btn">Abbrechen</button></footer>
      </div>
    </form>
  </div>
</section>

<svg class="arrow" viewBox="830 338 132 44" aria-hidden="true"><path d="M848 370L944 350" stroke="#00f814" stroke-width="7"/><path d="M831 373.500L849.500 359l4.500 20zM959.500 346.500L937 341l4.500 20z" fill="#00f814"/></svg>

<section class="revit" aria-label="Revit">
  <header class="v-title">
    <button><svg><use href="#rl"/></svg></button><button><svg><use href="#pj"/></svg></button><i class="gap"></i><button><svg><use href="#ro"/></svg></button><button><svg><use href="#rs"/></svg></button><button><svg><use href="#sync"/></svg></button><button class="dd"><svg><use href="#down"/></svg></button><button><svg><use href="#ru"/></svg></button><button class="dd"><svg><use href="#down"/></svg></button><button><svg><use href="#rr"/></svg></button><button class="dd dim"><svg><use href="#down"/></svg></button><button><svg><use href="#rp"/></svg></button><i class="sep"></i><button><svg><use href="#rd"/></svg></button><button class="dd"><svg><use href="#down"/></svg></button><button><svg><use href="#rm"/></svg></button><button><svg><use href="#tag"/></svg></button><button class="bigA">A</button><i class="sep"></i><button><svg><use href="#house"/></svg></button><button class="dd"><svg><use href="#down"/></svg></button><button><svg><use href="#sec"/></svg></button><button><svg><use href="#thin"/></svg></button><i class="sep"></i><button><svg><use href="#cw"/></svg></button>
    <button class="more"><svg viewBox="0 0 10 8"><path d="M0 0l5 4-5 4zM5 0l5 4-5 4z" fill="currentColor"/></svg></button>
    <h1>FAQ.rvt - 3D-An...</h1>
    <button class="more"><svg viewBox="0 0 10 8"><path d="M7 0v8l-4-4z" fill="currentColor"/></svg></button>
    <button><svg><use href="#bin"/></svg></button><button><svg><use href="#usr"/></svg></button><button class="sign">Anmelden</button><button class="dd"><svg><use href="#down"/></svg></button><i class="gap"></i><button><svg><use href="#cart"/></svg></button><i class="sep"></i><i class="gap"></i><button><svg><use href="#q"/></svg></button><button class="dd"><svg><use href="#down"/></svg></button>
    <div class="winbtns"><button aria-label="Minimieren"><svg viewBox="0 0 12 12"><path d="M2 11h8" stroke="currentColor" stroke-width="2"/></svg></button><button aria-label="Maximieren"><svg viewBox="0 0 12 12"><path d="M1 1.500h10v9h-10z" fill="none" stroke="currentColor" stroke-width="1.500"/></svg></button><button aria-label="Schließen"><svg><use href="#x"/></svg></button></div>
  </header>
  <nav class="v-tabs"><button class="file">Datei</button><button>Architektur</button><button>Ingenieurbau</button><button>Stahlbau</button><button>Gebäudetechnik</button><button>Einfügen</button><button>Beschriften</button><button>Berechnung</button><button>Körpermodell &amp; Grundstück</button><button>Zusammenarbeit</button><span class="tabend"><svg viewBox="0 0 10 8"><path d="M0 0l5 4-5 4zM5 0l5 4-5 4z" fill="#fff"/></svg><button aria-label="Minimieren"><svg viewBox="0 0 15 9"><rect x=".5" y=".5" width="14" height="8" rx="2" fill="#eee" stroke="#333"/><path d="M5 6h5l-2.500-3z" fill="#222"/></svg></button><svg><use href="#down"/></svg></span></nav>
  <div class="ribbon">
    <button class="rb"><svg><use href="#b1"/></svg><span>Auswählen</span><i></i></button>
    <button class="rb"><svg><use href="#b2"/></svg><span>Eigensch...</span><i></i></button>
    <button class="rb"><svg><use href="#b3"/></svg><span>Zwische...</span><i></i></button>
    <button class="rb"><svg><use href="#b4"/></svg><span>Geometrie</span><i></i></button>
    <button class="rb"><svg><use href="#b5"/></svg><span>Ändern</span><i></i></button>
    <button class="rb"><svg><use href="#b6"/></svg><span>Ansicht</span><i></i></button>
    <div class="meas"><button><svg><use href="#rd"/></svg><i></i></button><button><svg><use href="#rm"/></svg><i></i></button><span>Messen</span></div>
    <button class="rb"><svg><use href="#b7"/></svg><span>Erstellen</span><i></i></button>
    <div class="ctx">
    <button class="rb"><svg><use href="#g1"/></svg><span>Modus</span><i></i></button>
    <button class="rb"><svg><use href="#g2"/></svg><span>Berechn...</span><i></i></button>
    <button class="rb"><svg><use href="#g3"/></svg><span>Verbind...</span><i></i></button>
    <button class="rb"><svg><use href="#g4"/></svg><span>Ausricht...</span><i></i></button>
    <button class="rb"><svg><use href="#g5"/></svg><span>Arbeitse...</span><i></i></button>
    </div>
  </div>
  <div class="opts">Ändern | Skelettbau</div>
  <div class="work">
    <aside class="props">
      <header><h2>Eigenschaften</h2><button aria-label="Schließen"><svg><use href="#x"/></svg></button></header>
      <div class="family"><svg class="thumb" viewBox="0 0 66 66"><path d="M0 8h50l16 10v30h-66z" fill="#ececec"/><path d="M18 7h16c18 0 18 22 5 26l13 16h-14l-9-14v14h-11z" fill="#7e7e7e"/><path d="M18 7l9 6v34l-9 2z" fill="#a2a2a2"/><circle cx="32" cy="19" r="4" fill="#e8e8e8"/></svg><svg class="fd"><use href="#down"/></svg></div>
      <div class="ptype"><span class="pick"><select aria-label="Typ"><option>Skelettbau Träger (analytisc</option></select><svg><use href="#chev"/></svg></span><button class="et" disabled><svg viewBox="0 0 18 18"><path d="M1 4l2-3h5v5l-2 2h-5zM10 4l2-3h4v5M1 11h6v6h-6zM9 8h7v9h-7zM11 10h3v3h-3z" fill="none" stroke="#999"/></svg>Typ bearbeiten</button></div>
      <div class="plist">
        <table>
          <colgroup><col class="n"><col class="v"><col class="b"></colgroup>
          <tr class="h"><th colspan="3">Berechnungsmodell</th></tr>
          <tr><th>Berechnen als</th><td class="boxed">Pendelstütze</td><td></td></tr>
          <tr class="green"><th>Member Type Truss</th><td><input type="checkbox" aria-label="Member Type Truss"></td><td><button aria-label="Zuordnen"></button></td></tr>
          <tr class="green"><th>Member Type Tension</th><td><input type="checkbox" checked aria-label="Member Type Tension"></td><td><button aria-label="Zuordnen"></button></td></tr>
          <tr><th>Kopplungen</th><td>Von Stütze</td><td></td></tr>
          <tr class="h"><th colspan="3">Analytische Eigenschaften</th></tr>
          <tr class="ro"><th>Familientyp</th><td>Rundstahl Träg...</td><td></td></tr>
          <tr class="ro"><th>Materialobjekt (physikali...</th><td>Baustahl - S 235</td><td></td></tr>
          <tr class="ro"><th>Länge</th><td>4,7001 m</td><td></td></tr>
          <tr class="ro"><th>Querschnittdrehung</th><td>0,00°</td><td></td></tr>
          <tr class="h"><th colspan="3">Analytische Achse</th></tr>
          <tr><th>Anfang - Ausrichtungsm...</th><td>Automatische E...</td><td></td></tr>
          <tr class="ro"><th>y-Projektion Anfang</th><td>Basislinie</td><td></td></tr>
          <tr class="ro"><th>z-Projektion Anfang</th><td>Basislinie</td><td></td></tr>
          <tr><th>Ende - Ausrichtungsmet...</th><td>Automatische E...</td><td></td></tr>
          <tr class="ro"><th>y-Projektion Ende</th><td>Basislinie</td><td></td></tr>
          <tr class="ro"><th>z-Projektion Ende</th><td>Basislinie</td><td></td></tr>
          <tr class="h"><th colspan="3">Freigaben/Stabendkräfte</th></tr>
          <tr><th>Freigabe Anfang</th><td>Fest</td><td></td></tr>
          <tr class="ro"><th>Fx Anfang</th><td><input type="checkbox" disabled aria-label="Fx Anfang"></td><td></td></tr>
          <tr class="ro"><th>Fy Anfang</th><td><input type="checkbox" disabled aria-label="Fy Anfang"></td><td></td></tr>
          <tr class="ro"><th>Fz Anfang</th><td><input type="checkbox" disabled aria-label="Fz Anfang"></td><td></td></tr>
          <tr class="ro"><th>Mx Anfang</th><td><input type="checkbox" disabled aria-label="Mx Anfang"></td><td></td></tr>
          <tr class="ro"><th>My Anfang</th><td><input type="checkbox" disabled aria-label="My Anfang"></td><td></td></tr>
          <tr class="ro"><th>Mz Anfang</th><td><input type="checkbox" disabled aria-label="Mz Anfang"></td><td></td></tr>
          <tr><th>Freigabe Ende</th><td>Fest</td><td></td></tr>
          <tr class="ro"><th>Fx Ende</th><td><input type="checkbox" disabled aria-label="Fx Ende"></td><td></td></tr>
          <tr class="ro"><th>Fy Ende</th><td><input type="checkbox" disabled aria-label="Fy Ende"></td><td></td></tr>
          <tr class="ro"><th>Fz Ende</th><td><input type="checkbox" disabled aria-label="Fz Ende"></td><td></td></tr>
        </table>
        <div class="vscroll"><svg class="up"><use href="#chev"/></svg><i></i><svg><use href="#chev"/></svg></div>
      </div>
      <footer><a href="#hilfe">Hilfe zu Eigenschaften</a><button disabled>Anwenden</button></footer>
    </aside>
    <div class="views">
      <nav class="vtabs"><button><svg viewBox="0 0 18 18"><path d="M1 2h6v3M1 2v13h8M9 5h7v11h-10v-5h3z" fill="none" stroke="#888"/><path d="M11 7v6" stroke="#888" stroke-dasharray="2 1"/></svg>Ebene 0</button><button class="on"><svg><use href="#house"/></svg><b>{3D}</b><svg class="cl"><use href="#x"/></svg></button><svg class="vm" viewBox="0 0 10 8"><path d="M0 1h10M1 4h8l-4 4z" fill="#333" stroke="#333"/></svg></nav>
      <div class="vbody">
        <div class="canvas">
          <svg class="view" viewBox="1250 199 649 613" preserveAspectRatio="xMinYMin slice">
            <defs><linearGradient id="bg" x1="0" y1="0" x2="0" y2="1"><stop offset="0" stop-color="#d6d6d6"/><stop offset="1" stop-color="#c6c6c6"/></linearGradient><radialGradient id="sh"><stop offset="0" stop-color="#777"/><stop offset="1" stop-color="#fff" stop-opacity="0"/></radialGradient></defs>
            <path d="M1250 199H1492.500V377L1465 391L1423 414L1250 507z" fill="#dadada"/>
            <path d="M1250 710L1888.600 804L1899 798V812H1250z" fill="url(#bg)"/>
            <g stroke="#111" stroke-width="1.200" fill="none">
              <path d="M1492.500 199V377L1250 507M1492.500 377L1866 432M1250 674L1888.600 768.500L1899 763M1250 710L1888.600 804L1899 798M1888.600 768V804"/>
              <path d="M1663.700 240.700L1740.700 199H1797L1683.600 259z" fill="#fff" stroke="none"/>
              <path d="M1680 243L1764 199H1785L1683 253z" fill="#d4d4d4" stroke="none"/>
              <path d="M1663.700 240.700L1740.700 199"/><path d="M1680 243L1764 199M1683.600 259L1797 199" stroke-width="1.800"/>
              <path d="M1641.300 249L1668.500 252V586L1641.300 582z" fill="#fff"/><path d="M1668.500 252L1683.500 245V578.500L1668.500 586z" fill="#dadada"/><path d="M1641 248.700L1656 240.700L1683 244.700L1668.500 252z" fill="#fff"/>
              <path d="M1444 358.700L1644 249.500L1662.400 252.700V271L1465 377V362z" fill="#fff" stroke="none"/>
              <path d="M1465 361L1654 258V268L1465 370z" fill="#d4d4d4" stroke="none"/>
              <path d="M1444 358.700L1644 250M1654 258V268"/><path d="M1462 361L1662.400 252.700L1643 249.500M1465 377L1662.400 270.500L1655 269" stroke-width="1.800"/>
              <path d="M1423.300 365L1451 370V703L1423.300 699z" fill="#fff"/><path d="M1451 370L1465.300 362V696L1451 703z" fill="#dadada"/><path d="M1423 365L1438 358L1465 362L1451 370z" fill="#fff"/>
              <path d="M1866 432L1888.600 434.500V768L1866 765z" fill="#fff"/><path d="M1888.600 434.500L1899 429V763L1888.600 768z" fill="#dadada"/><path d="M1866 432L1899 414"/>
            </g>
            <path d="M1646.500 279L1466 657M1654 262l-4 10" stroke="#1648d0" stroke-width="3.600"/><path d="M1646.500 279L1466 657M1654 262l-4 10" stroke="#8cb8f8" stroke-width="1.600"/>
            <ellipse cx="1821" cy="304" rx="50" ry="16" fill="none" stroke="#c4c4c4" stroke-width="10" stroke-dasharray="1 1" opacity=".4"/><ellipse cx="1821" cy="304" rx="57" ry="20" fill="none" stroke="#bbb" stroke-dasharray="2 2"/><ellipse cx="1821" cy="304" rx="43" ry="14" fill="#fff" stroke="#ccc"/>
            <ellipse cx="1824" cy="302" rx="36" ry="12" fill="url(#sh)"/>
            <g stroke="#777"><path d="M1793 259L1830.600 263V307L1793 300z" fill="#e8e8e8"/><path d="M1830.600 263L1848 255V295L1830.600 307z" fill="#cfcfcf"/><path d="M1793 259L1814 251L1848 255L1830.600 263z" fill="#f6f6f6"/></g>
            <path d="M1813 259l6-3M1817 260l8-4M1822 257l4 1M1833 277v9M1836 277v8l3-3v-6zM1842 275v8M1845 273v7" stroke="#888" stroke-width="1.300" fill="none"/>
            <text x="1799" y="282" class="vc" transform="rotate(7 1799 282)">LINKS</text>
            <path d="M1775 290l9 3M1780 287v9M1783 317l14 4M1790 314l8 4M1864 307l14 5M1870 305l4 10" stroke="#bbb" stroke-width="2"/>
          </svg>
          <div class="nav3"><svg viewBox="0 0 34 116"><rect x=".5" y=".5" width="33" height="115" rx="4" fill="#d8d8d8" fill-opacity=".35" stroke="#aaa" stroke-width="1.500"/><circle cx="27" cy="7" r="3.500" fill="none" stroke="#888"/><path d="M25.500 5.500l3 3M28.500 5.500l-3 3" stroke="#888"/><path d="M16 21h10v11a10 10 0 1 1-10-11z" fill="#eee" stroke="#777"/><circle cx="17" cy="31" r="5" fill="#fff" stroke="#777"/><path d="M14 51h6l-3 3z M14 93h6l-3 3z" fill="#777"/><path d="M5 58h24" stroke="#aaa"/><path d="M9 67h11v11h-11z" fill="#8cc488" stroke="#68a068"/><circle cx="19" cy="77" r="3" fill="#fff" stroke="#888"/><path d="M21 79l4 4" stroke="#888" stroke-width="2"/><circle cx="27" cy="109" r="3.500" fill="#bbb" stroke="#888"/><path d="M25 109h4" stroke="#555"/></svg></div>
        </div>
        <div class="vscroll tall"><svg class="up"><use href="#chev"/></svg><i></i><svg><use href="#chev"/></svg></div>
      </div>
      <footer class="vbar">
        <span>1 : 50</span>
        <div class="vicons">
          <svg viewBox="0 0 16 16"><path d="M1 2h14v12h-14z" fill="#eee" stroke="#444"/><path d="M2 4h12M2 7h12M2 10h12M3.500 5.500h12M3.500 8.500h11M3.500 11.500h11" stroke="#777" stroke-dasharray="1.500 1.500" stroke-width="1.500"/></svg>
          <svg viewBox="0 0 16 16"><path d="M1 7l4-4h10v7l-4 4h-10z" fill="#a8d4f4" stroke="#1868a8" stroke-width="1.300"/><path d="M1 7h10v7M11 7l4-4" fill="none" stroke="#1868a8"/></svg>
          <svg viewBox="0 0 16 16"><circle cx="6" cy="7" r="4" fill="#ffe08a" stroke="#c88a10"/><path d="M6 0v2M6 12v2M0 7h1M1 2l2 2M11 2l-2 2" stroke="#c88a10"/><path d="M8 8l6 7M14 8l-6 7" stroke="#c82020" stroke-width="2.500"/></svg>
          <svg viewBox="0 0 16 16"><circle cx="7" cy="6" r="5" fill="#d8ecfa" stroke="#2878b8"/><path d="M2 13h6" stroke="#555" stroke-width="2"/><path d="M8 8l6 7M14 8l-6 7" stroke="#c82020" stroke-width="2.500"/></svg>
          <svg viewBox="0 0 16 16"><path d="M1 5l2 5 3 3h4v-7l-2-3h-3v3z" fill="#eee" stroke="#555"/><circle cx="12" cy="7" r="3" fill="#cfe8fa" stroke="#2878b8"/><path d="M12 10v4" stroke="#444" stroke-width="2"/></svg>
          <svg viewBox="0 0 16 16"><path d="M0 11h4v-7h8v9M2 6h13" fill="none" stroke="#2868a8" stroke-width="1.500"/><path d="M8 7l6 7M14 7l-6 7" stroke="#c82020" stroke-width="2.500"/></svg>
          <svg viewBox="0 0 16 16"><path d="M0 11h4v-7h5M4 14v-7h4v6" fill="none" stroke="#444" stroke-width="1.500"/><circle cx="12" cy="6" r="3" fill="#cfe8fa" stroke="#2878b8"/><path d="M12 10v4" stroke="#444" stroke-width="2"/></svg>
          <svg viewBox="0 0 16 16"><path d="M1 6l5-4 6 4v3M1 6v6l5 2M6 2v3l-5 1" fill="#eee" stroke="#444"/><path d="M8 9h6v6h-6z" fill="#b8dcc8" stroke="#285a48"/><path d="M9 9v-2h4v2" fill="none" stroke="#285a48"/></svg>
          <svg viewBox="0 0 16 16"><path d="M0 6l4 1M7 9l2-1M11 5l4-2" stroke="#444"/><circle cx="5" cy="9" r="2.500" fill="#fff" stroke="#444"/><circle cx="11" cy="8" r="2.500" fill="#fff" stroke="#444"/></svg>
          <svg viewBox="0 0 16 16"><circle cx="8" cy="6" r="3" fill="#b8dcf8" stroke="#2878c8"/><path d="M8 9v5" stroke="#444" stroke-width="2"/></svg>
          <svg viewBox="0 0 16 16"><path d="M1 3h13v10h-13z" fill="#eee" stroke="#111" stroke-width="1.500" stroke-dasharray="3 1"/><circle cx="11" cy="10" r="3" fill="#888" stroke="#222"/></svg>
          <svg viewBox="0 0 16 16"><path d="M1 14v-8l5-3h6M1 9h9v5" fill="none" stroke="#444"/><path d="M3 14v-6M7 14v-6M1 11h9" stroke="#c82020" stroke-width="1.500"/><circle cx="12" cy="6" r="3" fill="#ffb83a" stroke="#c88a10"/><path d="M12 10v4" stroke="#444" stroke-width="2"/></svg>
          <svg viewBox="0 0 16 16"><path d="M1 6h7v8h-7zM5 6l3-4h7v8l-3 4h-4M8 6h4v8M12 6l3-4" fill="#ddd" stroke="#555"/></svg>
          <svg viewBox="0 0 16 16"><path d="M1 1v13M14 1v5M1 3h13M3 1l-2 2 2 2M12 1l2 2-2 2M1 13h6" fill="none" stroke="#444"/><path d="M9 9h6v5h-6z" fill="#444"/><path d="M10 9v-2h4v2" fill="none" stroke="#444"/></svg>
        </div>
        <div class="hscroll"><svg class="l"><use href="#chev"/></svg><i></i><svg class="r"><use href="#chev"/></svg></div>
        <svg class="rg" viewBox="0 0 9 9"><path d="M7 1v8M4 4v5M1 7v2" stroke="#aaa" stroke-width="2" stroke-dasharray="2 1"/></svg>
      </footer>
    </div>
  </div>
</section>
</main>
</body>
</html>
```

FILE: styles.css
```css
*{box-sizing:border-box}
html,body{height:100%}
body{margin:0;overflow:hidden;background:#000;color:#000;font:11px/16px "Liberation Sans",Arial,sans-serif}
button,input,select{font:inherit;color:inherit;margin:0;padding:0;border:0;background:none;border-radius:0;min-width:0}
button{display:inline-flex;align-items:center;justify-content:center;white-space:nowrap}
h1,h2{margin:0;font-size:12px;font-weight:400;white-space:nowrap}
svg{display:block;flex:none;width:20px;height:20px;fill:none}
ul{margin:0;padding:0;list-style:none}
fieldset{margin:0;padding:0;border:0;min-width:0}
.sprite{display:none}
.screen{display:flex;height:100vh;position:relative}

/* shared controls */
.pick{position:relative;display:flex}
.pick select{appearance:none;flex:1;width:100%;height:100%;padding:0 18px 0 4px;border:1px solid #7a7a7a;background:#fff;opacity:1}
.pick svg{position:absolute;right:5px;top:50%;margin-top:-5px;width:10px;height:10px;color:#333;pointer-events:none}
.winbtns{display:flex;margin-left:auto}
.winbtns svg{width:11px;height:11px}
.g8{font:bold 8px "Liberation Serif",serif;fill:#7c8698}
.k8{font:8px "Liberation Serif",serif;fill:#333}
.k9{font:bold 9px "Liberation Serif",serif;fill:#111}
.k11{font:12px "Liberation Serif",serif;fill:#222}
.n9{font:italic bold 9px "Liberation Serif",serif;fill:#223}

/* RFEM */
.rfem{flex:1 1 50%;min-width:0;display:flex;flex-direction:column;border-left:2px solid #555a62;background:#fff;overflow:hidden}
.r-title{display:flex;align-items:center;height:30px;padding-left:7px;background:#fff;color:#888;font-family:"Open Sans",sans-serif}
.logo{width:17px;height:17px;margin-right:4px}
.r-title .winbtns{color:#777}
.r-title .winbtns button{width:46px;height:28px}
.r-menu{display:flex;align-items:center;height:24px;background:#cfd4de;color:#2c2c34;font:11px/16px "Open Sans",sans-serif}
.grip{flex:none;width:9px;height:16px;background:repeating-linear-gradient(#98a0b0 0 2px,transparent 2px 4px) 3px 0/2px 16px no-repeat}
.grip.mid{width:12px}
.bridge{width:16px;height:13px}
.menus{display:flex;gap:15px;margin-left:10px}
.mdi{display:flex;gap:6px;margin-left:auto;padding:4px 6px 0 0;color:#555}
.mdi svg{width:10px;height:10px}
.bold{--sw:2}
.bar{display:flex;align-items:center;height:26px;background:linear-gradient(#edf1f8,#d6dce8);border-bottom:1px solid #b0b8c8;overflow:hidden}
.bar button{flex:none;width:22px;height:24px}
.bar button svg{width:18px;height:18px}
.bar .dd{width:13px}
.bar .dd svg{width:6px;height:6px;color:#555}
.bar .sep{flex:none;width:8px;height:14px;background:linear-gradient(90deg,transparent 3px,#aab2c2 3px 4px,#fff 4px 5px,transparent 5px)}
.cut{flex:none;width:12px;height:14px;background:linear-gradient(90deg,transparent 3px,#223a60 3px 6px,transparent 6px)}
.loadcase{flex:none;width:216px;height:18px;margin:0 2px}
.loadcase select{border-color:#999fa8;background:#f0f0f0}
.loadcase svg{width:6px;height:6px;margin-top:-3px;color:#777}
.scene{position:relative;flex:1;min-height:0;background:#000;border:1px solid #888;border-width:2px 2px 0 1px;overflow:hidden}
.view{width:100%;height:100%}
.ax{font:9px "Liberation Sans",sans-serif}
.mode{position:absolute;left:4px;top:4px;color:#fff}

/* dialog window */
.dialog{position:absolute;left:281px;top:140px;width:622px;border:1px solid #2a7ad8;background:#f0f0f0}
.d-title{display:flex;align-items:center;justify-content:space-between;height:25px;padding:0 9px 0 3px;background:#fff;font-family:"Open Sans",sans-serif}
.d-title svg{width:12px;height:12px;--sw:1.200}
.d-body{padding:7px 8px 7px 7px}
.tabs{display:flex;align-items:flex-end;margin-bottom:-1px}
.tabs button{height:19px;padding:0 3px;border:1px solid #d9d9d9;border-left:0;background:#f0f0f0}
.tabs .on{height:21px;padding:0 11px 4px 7px;border-left:1px solid #d9d9d9;border-bottom:0;background:#fff;position:relative}
.panel{display:flex;flex-direction:column;gap:9px;padding:9px 5px 9px 7px;border:1px solid #dcdcdc;background:#fff}
.cols{display:grid;grid-template-columns:300px 1fr;gap:8px}
.col{display:flex;flex-direction:column;gap:9px;min-width:0}
.pair{display:grid;grid-template-columns:109px 181px;gap:8px}
.grp{padding-bottom:4px;border:solid #a9a3ee;border-width:0 1px 1px 0;background:#f0f4fa;clip-path:polygon(0 0,calc(100% - 10px) 0,100% 10px,100% 100%,0 100%)}
.grp legend{float:left;width:100%;height:16px;padding:0 2px;background:#dae4f4;color:#1c4270}
.grp legend+*{clear:both}
.line{display:flex;align-items:center;gap:4px;padding:4px 3px 0}
.line+.line{padding-top:3px}
.txt{height:20px;margin-bottom:1px;padding:0 3px;border:1px solid #7a7a7a;background:#f0f0f0;width:45px;box-shadow:inset 0 0 0 1px #fff}
.num{text-align:right}
.wide{flex:1;margin-bottom:2px}
.sm{width:63px;height:21px}
.ib{flex:none;width:25px;height:21px;border:1px solid #a8a8a8;background:#e3e3e3}
.ib svg{width:17px;height:17px}
.ib.off{background:#ccc;border-color:#bfbfbf;--bar:#999;--hand:#c8c8c0;--inf:#8c8c84;--red:#999}
.off{color:#8d8d8d}
.pick.off select{border-color:#c4c4c4;color:#6d6d6d}
.pick.off svg{color:#aaa}
.grow{flex:1;height:21px}
.grow select{background:linear-gradient(#f0f0f0,#f0f0f0) 2px 2px/calc(100% - 22px) 15px no-repeat,#fff}
.rot{display:grid;grid-template-columns:16px 74px 27px 1fr;grid-template-rows:20px 21px 38px 21px;row-gap:11px;align-items:center;padding:5px 3px 0;margin-bottom:-11px}
.rot .line{padding:0}
input[type=radio]{appearance:none;width:13px;height:13px;border:1px solid #333;border-radius:50%;background:#fff}
input[type=radio]:checked{background:radial-gradient(circle,#333 3px,#fff 4px)}
input[type=radio]:disabled{border-color:#bbb}
input[type=radio]:disabled:checked{background:radial-gradient(circle,#bbb 3px,#fff 4px)}
.spin{display:flex;width:83px;height:20px;padding:1px;border:1px solid #5a94d0;background:#fff;margin-right:1px}
.spin input{flex:1;width:40px;text-align:right;padding-right:2px}
.spin button{border:1px solid #aaa;background:#f0f0f0}
.spin svg{width:7px;height:5px;fill:#000}
.ud{display:flex;flex-direction:column;width:13px}
.ud button{flex:1}
.spin .rt{width:10px;margin-left:1px}
.spin .rt svg{width:5px;height:7px}
.plane{grid-column:2;align-self:start;line-height:19px}
.planes{grid-column:3/5}
.planes label{display:flex;align-items:center;gap:3px;height:19px}
.inf{grid-column:4;justify-self:end;margin-top:-24px}
.type{position:relative}
.combo{justify-content:flex-start;width:218px;height:21px;padding-left:2px;border:1px solid #0078d7;background:#fff}
.type .line{padding-left:2px}
.combo span{flex:1;text-align:left;margin-left:5px}
.combo b{display:flex;align-items:center;justify-content:center;width:16px;height:19px;background:#cce4f7;border-left:1px solid #0078d7}
.combo svg{width:9px;height:9px}
.sw{flex:none;width:13px;height:14px;border:1px solid #333;background:#8a8aff}
.preview{flex:1;border:solid #8a8a8a;border-width:1px 0 0 1px;background:linear-gradient(135deg,#f6f0da,#fdf8ea)}
.types{position:absolute;left:2px;top:41px;width:218px;border:1px solid #6a6a6a;background:#fff;box-shadow:4px 4px 4px rgba(0,0,0,.5);z-index:2}
.types li{display:flex;align-items:center;gap:5px;height:16px;padding-left:2px}
.types .hl{background:#80ff80;color:#008c00}
.types .cur{background:#00bc6c;color:#80ff80;outline:1px dotted #263;outline-offset:-1px}
.c1{background:#699cff}.c2{background:#f8c400}.c3{background:#b87070}.c4{background:#3cdc00;border-color:#090}.c5{background:#f00}.c6{background:#48c488;border-color:#196}.c7{background:#94682c}.c8{background:#2c6000}.c9{background:#ecc49c}.c10{background:#98cccc}.c11{background:#e87434}.c12{background:#209c94}.c13{background:#64646c}.c14{background:#b4d87c}.c15{background:#e0e0ff}.c16{background:#3400c8}.c17{background:#00e0ff}.c18{background:#009800}.c19{background:#a05c00}
.lab{width:74px}
.cs{flex:1;justify-content:flex-start;height:21px;padding-left:2px;border:1px solid #7a7a7a;background:#fff;box-shadow:inset 0 0 0 1px #fff}
.dot{width:5px;height:5px;margin:0 11px 0 6px;border-radius:50%;background:#3c5aa0}
.mat{width:104px;margin-left:5px;padding-left:5px;text-align:left;border:solid #333;border-width:0 1px}
.mat+span{margin-left:3px}
.ends .line{padding-right:63px}
.d-foot{display:flex;gap:10px;padding-top:10px}
.btn{width:73px;height:21px;border:1px solid #adadad;background:#e1e1e1}
.ok{margin-left:auto;border:2px solid #0078d7}

/* arrow across both windows */
.arrow{position:absolute;left:830px;top:338px;width:132px;height:44px;z-index:5}

/* Revit */
.revit{flex:1 1 50%;min-width:0;display:flex;flex-direction:column;padding-left:5px;background:linear-gradient(90deg,#8a8a8a,#c4c4c4 5px,#ccc 6px);color:#2a2a2a;font:11px/16px "Open Sans",sans-serif}
.v-title{display:flex;align-items:center;height:33px;white-space:nowrap}
.v-title button{flex:none;width:24px;height:24px}
.v-title svg{width:18px;height:18px}
.v-title .dd{width:12px}
.v-title .dd svg{width:7px;height:7px;color:#333}
.v-title .dim svg{color:#888}
.v-title .sep{flex:none;width:8px;height:24px;background:linear-gradient(90deg,transparent 3px,#aaa 3px 4px,transparent 4px)}
.gap{flex:none;width:3px}
.v-title .bigA{font:bold 18px/20px "Open Sans",sans-serif}
.v-title .more{width:16px}
.v-title .more svg{width:10px;height:8px}
.v-title h1{width:94px;margin-left:10px;font-size:11px}
.v-title .sign{width:82px;justify-content:flex-start}
.v-title .winbtns button{width:25px}
.v-title .winbtns svg{width:12px;height:12px;--sw:2}
.v-tabs{display:flex;align-items:center;gap:1px;height:20px}
.v-tabs>button{height:20px;padding:0 10px}
.v-tabs .file{width:45px;margin-right:3px;background:#2a79b2;color:#fff}
.tabend{display:flex;align-items:center;gap:8px;margin:0 10px 0 auto}
.tabend svg{width:10px;height:8px}
.tabend>button svg{width:15px;height:9px}
.tabend>svg:last-child{width:7px;height:7px;color:#222}
.ribbon{display:flex;align-items:flex-start;height:96px;padding:1px 1px 2px;background:#e2eed6;border-bottom:1px solid #c0c4cc;overflow:hidden}
.rb{flex:none;flex-direction:column;justify-content:flex-start;width:60px;height:93px;margin-right:1px;padding-top:5px;border:1px solid #c8ccc4;background:linear-gradient(#fff 30%,#ececf0)}
.rb svg{width:32px;height:32px}
.rb span{margin-top:3px}
.rb i,.meas i{width:0;height:0;border:4px solid transparent;border-top-color:#333;border-bottom:0}
.rb i{margin-top:27px}
.ctx{display:flex;margin-left:4px}
.ctx .rb{background:#e4f0d8;border-color:#c4ccc8}
.meas{display:flex;flex-direction:column;align-items:center;width:56px;height:93px;background:#eee;padding-top:4px}
.meas button{gap:6px;height:36px}
.meas svg{width:30px;height:30px}
.meas i{border-width:3px;border-bottom:0}
.opts{height:27px;padding:5px 7px 0;background:#e4f0d8;color:#999;border-bottom:1px solid #ccc}
.work{display:flex;flex:1;min-height:0;padding-top:1px}
.props{flex:none;width:282px;display:flex;flex-direction:column;background:#eee;color:#000}
.props header{display:flex;align-items:center;justify-content:space-between;height:22px;padding:0 5px 0 3px}
.props h2{font-size:11px;color:#333}
.props header svg{width:10px;height:10px;--sw:2}
.family{display:flex;align-items:center;justify-content:space-between;height:70px;padding:0 3px;margin:0 3px 0 0;border:1px solid #e0e0e0;background:#f2f2f2}
.thumb{width:66px;height:66px;border:1px solid #ddd;background:#f6f6f6}
.fd{width:8px;height:8px;color:#777}
.ptype{display:flex;align-items:center;height:25px;gap:5px}
.ptype .pick{width:167px;height:23px}
.ptype select{border-color:#adadad;background:#e3e3e3}
.et{color:#999;gap:4px}
.et svg{width:17px;height:17px}
.plist{flex:1;min-height:0;display:flex;overflow:hidden;background:#f0f0f0;align-items:stretch}
.plist table{flex:none;width:262px;align-self:flex-start;border-collapse:collapse;table-layout:fixed;background:#fff}
.n{width:152px}.v{width:98px}.b{width:12px}
.plist tr{height:18px}
.plist th,.plist td{height:18px;padding:0;font-weight:400;text-align:left;line-height:16px;white-space:nowrap;border:dotted #777;border-width:0 1px 1px 0}
.plist th{padding-left:8px}
.plist td:nth-child(2){padding-left:3px}
.plist .h th{padding-left:2px;border:0;background:#dcdcdc url("data:image/svg+xml,%3Csvg xmlns='http://www.w3.org/2000/svg' width='7' height='9' fill='none' stroke='%23000' stroke-width='1.300'%3E%3Cpath d='M1 4l2.500-3 2.500 3M1 8l2.500-3 2.500 3'/%3E%3C/svg%3E") right 6px center no-repeat}
.plist .ro{color:#777}
.plist .boxed{outline:1px solid #000;outline-offset:-1px}
.plist input{appearance:none;display:block;width:13px;height:13px;margin:3px 0 0;border:1px solid #c4c4c4;background:#fff}
.plist .green th,.plist .green td:nth-child(2){background:#80ff80;color:#008000}
.plist .green input{border-color:#008000;background:#80ff80}
.plist .green input:checked{background:url("data:image/svg+xml,%3Csvg xmlns='http://www.w3.org/2000/svg' width='11' height='11' fill='none' stroke='%23080' stroke-width='1.500'%3E%3Cpath d='M2 5l3 3 5-6'/%3E%3C/svg%3E")}
.plist td button{display:block;width:10px;height:15px;margin-left:1px;border:1px solid #aaa;background:#ddd}
.vscroll{display:flex;flex-direction:column;align-items:center;width:15px;margin-left:1px;background:#f0f0f0}
.vscroll svg{width:11px;height:11px;margin:4px 0 2px;color:#333}
.vscroll .up{transform:rotate(180deg)}
.vscroll i{width:15px;height:322px;background:#c8c8c8}
.vscroll svg:last-child{margin-top:auto}
.props footer{display:flex;align-items:center;justify-content:space-between;height:26px;padding:0 4px 0 2px}
.props a{color:#0066cc}
.props footer button{width:73px;height:21px;border:1px solid #bfbfbf;background:#ccc;color:#838383}
.views{flex:1;min-width:0;display:flex;flex-direction:column;border-left:1px solid #aaa}
.vtabs{display:flex;align-items:center;height:20px;background:#ccc}
.vtabs button{width:128px;height:20px;padding:0 4px 0 6px;justify-content:flex-start;gap:7px}
.vtabs svg{width:16px;height:16px}
.vtabs .on{background:#fff;gap:8px}
.vtabs .cl{width:10px;height:10px;margin-left:auto;--sw:2}
.vtabs .vm{width:9px;height:8px;margin:0 6px 0 auto}
.vbody{flex:1;min-height:0;display:flex;padding:2px 2px 0 3px;background:#fff}
.canvas{position:relative;flex:1;min-width:0;overflow:hidden;background:#fff}
.vc{font:bold 9px "Open Sans",sans-serif;fill:#888}
.nav3{position:absolute;right:1px;top:148px}
.nav3 svg{width:34px;height:116px}
.tall i{height:18px;margin-top:281px}
.vbar{display:flex;align-items:center;height:18px;background:#f0f0f0;color:#222}
.vbar>span{margin-left:30px;width:52px}
.vicons{display:flex;gap:5px}
.vicons svg{width:16px;height:16px}
.hscroll{flex:1;display:flex;align-items:center;margin-left:7px}
.hscroll svg{width:11px;height:11px;color:#333}
.hscroll i{width:17px;height:14px;margin:0 auto;background:#c8c8c8}
.hscroll .l{transform:rotate(90deg)}
.hscroll .r{transform:rotate(-90deg)}
.rg{width:9px;height:9px;margin:0 5px 0 8px}
```
